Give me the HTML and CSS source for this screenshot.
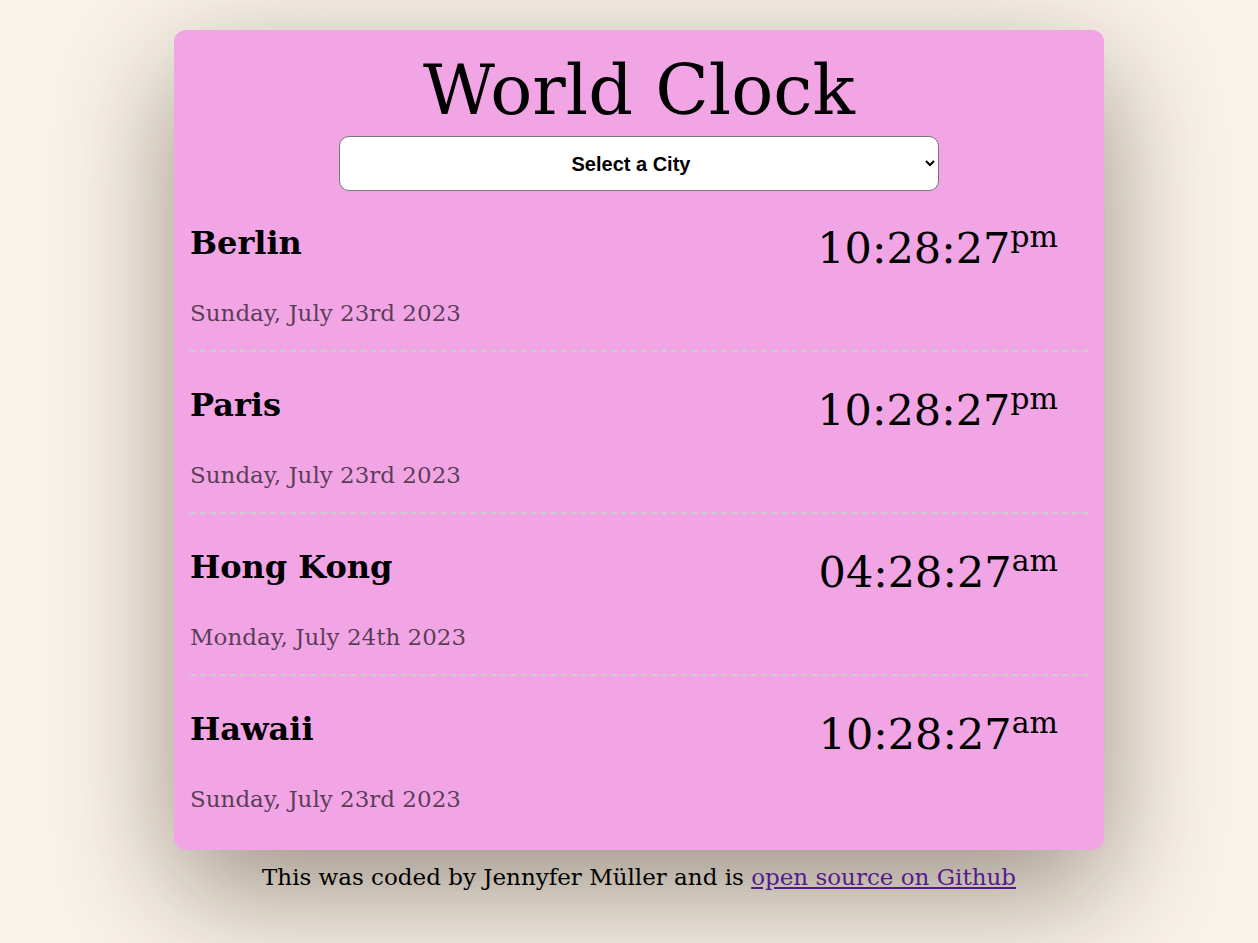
FILE: index.html
```html
<!DOCTYPE html>
<html lang="en">
<head>
<meta charset="utf-8">
<title>World Clock</title>
<link rel="stylesheet" href="styles.css">
</head>
<body>
<div class="container">
  <main class="card">
    <h1 class="title">World Clock</h1>
    <div class="picker">
      <select class="city-select">
        <option>Select a City</option>
        <option>Berlin</option>
        <option>Paris</option>
        <option>Hong Kong</option>
        <option>Hawaii</option>
      </select>
    </div>
    <div class="cities">
      <div class="city">
        <div class="city-info">
          <h2 class="city-name">Berlin</h2>
          <div class="date">Sunday, July 23rd 2023</div>
        </div>
        <div class="time">10:28:27<span class="ampm">pm</span></div>
      </div>
      <div class="city">
        <div class="city-info">
          <h2 class="city-name">Paris</h2>
          <div class="date">Sunday, July 23rd 2023</div>
        </div>
        <div class="time">10:28:27<span class="ampm">pm</span></div>
      </div>
      <div class="city">
        <div class="city-info">
          <h2 class="city-name">Hong Kong</h2>
          <div class="date">Monday, July 24th 2023</div>
        </div>
        <div class="time">04:28:27<span class="ampm">am</span></div>
      </div>
      <div class="city last">
        <div class="city-info">
          <h2 class="city-name">Hawaii</h2>
          <div class="date">Sunday, July 23rd 2023</div>
        </div>
        <div class="time">10:28:27<span class="ampm">am</span></div>
      </div>
    </div>
  </main>
  <footer class="footer">This was coded by Jennyfer Müller and is <a class="footer-link" href="#">open source on Github</a></footer>
</div>
</body>
</html>
```

FILE: styles.css
```css
html, body {
  margin: 0;
  padding: 0;
}
body {
  background: #faf3ea;
  font-family: "DejaVu Serif", "Liberation Serif", serif;
  color: #000;
  padding-left: 20px;
  overflow: hidden;
  height: 943px;
}
.container {
  width: 930px;
  margin: 30px auto 0;
}
.card {
  background: #f1a5e5;
  border-radius: 12px;
  padding: 14px 16px 14px;
  box-shadow: 0 40px 120px rgba(60, 45, 30, 0.5);
}
.title {
  margin: 0;
  text-align: center;
  font-weight: 400;
  font-size: 70px;
  line-height: 92px;
}
.picker {
  display: flex;
  justify-content: center;
}
.city-select {
  width: 600px;
  height: 55px;
  border: 1px solid #767676;
  border-radius: 10px;
  background: #fff;
  font-family: "Liberation Sans", Arial, sans-serif;
  font-weight: 700;
  font-size: 20px;
  text-align: center;
  text-align-last: center;
  color: #000;
  padding: 0 14px 0 10px;
}
.cities {
  margin-top: 14px;
}
.city {
  display: flex;
  justify-content: space-between;
  align-items: flex-start;
  padding: 28px 0 22px;
  border-bottom: 2px dashed #cccccc;
}
.city:first-child {
  padding-top: 13px;
}
.city.last {
  border-bottom: none;
}
.city-name {
  margin: 0;
  font-size: 32px;
  font-weight: 700;
  line-height: 50px;
}
.date {
  margin-top: 30px;
  font-size: 23px;
  line-height: 30px;
  color: rgba(0, 0, 0, 0.65);
}
.time {
  font-size: 43px;
  line-height: 60px;
  margin-right: 30px;
}
.ampm {
  font-size: 30px;
  vertical-align: 16px;
  line-height: 0;
}
.footer {
  text-align: center;
  font-size: 23px;
  line-height: 30px;
  padding-top: 12px;
}
.footer-link {
  color: #551a8b;
}
```
